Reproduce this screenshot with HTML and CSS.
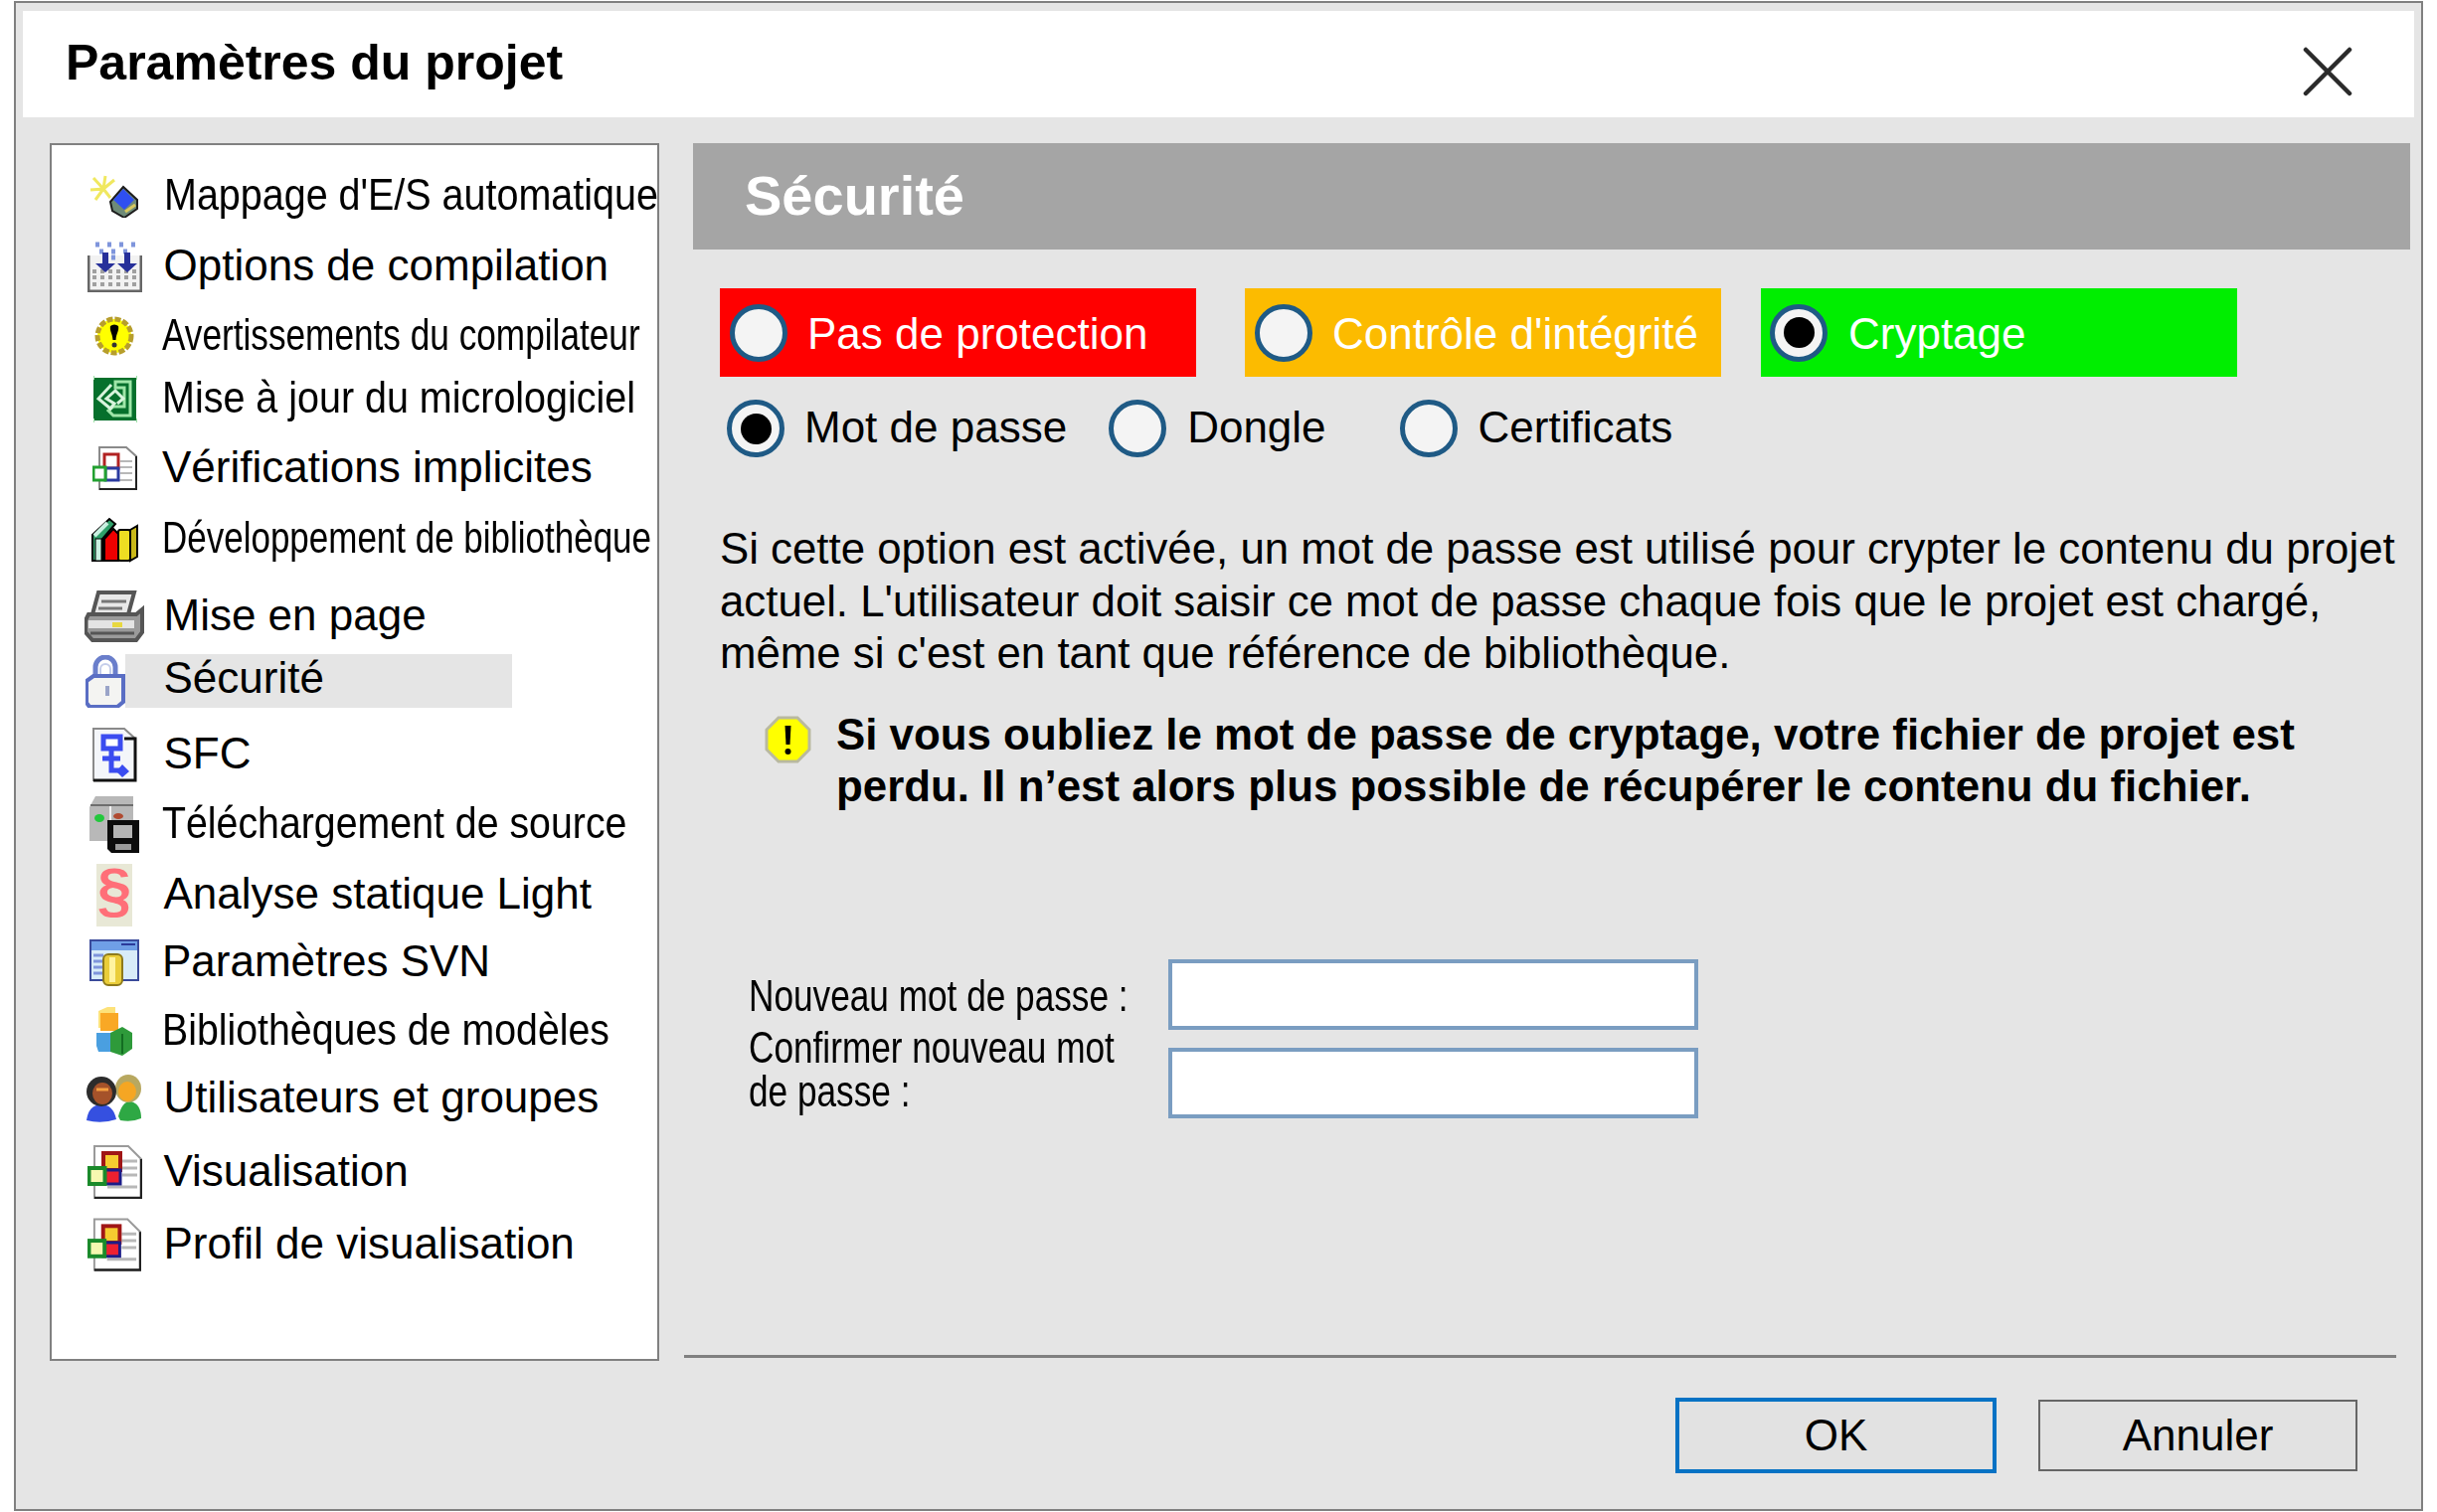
FILE: index.html
```html
<!DOCTYPE html>
<html lang="fr">
<head>
<meta charset="utf-8">
<title>Paramètres du projet</title>
<link rel="stylesheet" href="styles.css">
</head>
<body>
<div class="dialog">
  <header class="titlebar">
    <h1 class="title">Paramètres du projet</h1>
    <svg class="close" width="50" height="50" viewBox="0 0 50 50"><path d="M3 3 L47 47 M47 3 L3 47" stroke="#2a2a2a" stroke-width="4.500" stroke-linecap="round" fill="none"/></svg>
  </header>
  <div class="content">
    <nav class="sidebar">
      <div class="row">
        <div class="icon-box"><svg class="icon" width="54" height="43" viewBox="0 0 54 43">
          <path d="M16 14 L6 3 M16 14 L18 1 M16 14 L27 5 M16 14 L3 15 M16 14 L8 25 M16 14 L23 23" stroke="#f0e860" stroke-width="3"/>
          <path d="M23 27 L36 12 L50 25 L50 34 L37 43 L25 36 Z" fill="#6e8a78" stroke="#1c1c1c" stroke-width="2"/>
          <path d="M26 25 L36 14 L47 25 L37 35 Z" fill="#2f4ff0"/>
          <path d="M38 37 L48 30" stroke="#d8c860" stroke-width="3"/>
        </svg></div>
        <span class="label cond-90">Mappage d'E/S automatique</span>
      </div>
      <div class="row">
        <div class="icon-box"><svg class="icon" width="55" height="51" viewBox="0 0 55 51">
          <path d="M1 14 V50 H54 V14" fill="#f2f2f2" stroke="#666" stroke-width="3"/>
          <path d="M5 30 H50 M5 36 H50 M5 43 H50" stroke="#a0a0a0" stroke-width="4" stroke-dasharray="4 4"/>
          <path d="M8 3 H50 M12 10 H44 M24 16 H32" stroke="#7f95dc" stroke-width="5" stroke-dasharray="4 8"/>
          <path d="M15 11 V22 H8 L18 31 L28 22 H21 V11 Z M37 11 V22 H30 L40 31 L50 22 H43 V11 Z" fill="#27309a"/>
        </svg></div>
        <span class="label">Options de compilation</span>
      </div>
      <div class="row">
        <div class="icon-box"><svg class="icon" width="40" height="40" viewBox="0 0 40 40">
          <circle cx="20" cy="20" r="17" fill="#ffff00" stroke="#b79e2c" stroke-width="5" stroke-dasharray="6 2"/>
          <path d="M16 10 A6 6 0 0 1 24 10 C25 15 22 17 21.500 24 H18.500 C18 17 15 15 16 10 Z" fill="#000"/>
          <circle cx="20" cy="29" r="2.500" fill="#333"/>
        </svg></div>
        <span class="label cond-80 nudge">Avertissements du compilateur</span>
      </div>
      <div class="row">
        <div class="icon-box"><svg class="icon" width="47" height="47" viewBox="0 0 47 47">
          <rect x="2" y="2" width="43" height="43" fill="#06702c"/>
          <path d="M2 2 h1 M45 2 h1 M2 45 h1 M45 45 h1" stroke="#9ee0a8" stroke-width="4"/>
          <path d="M24 6 H39 V40 H22 L17 35 L22 31 H33 V12 H24 Z" fill="none" stroke="#9fe6a8" stroke-width="3"/>
          <path d="M20 9 L7 23 L19 33 L23 28 L15 23 L24 15 L32 23 L26 28" fill="none" stroke="#d8f4dc" stroke-width="3"/>
        </svg></div>
        <span class="label cond-93 nudge">Mise à jour du micrologiciel</span>
      </div>
      <div class="row">
        <div class="icon-box"><svg class="icon" width="45" height="44" viewBox="0 0 45 44">
          <path d="M7 1 H34 L44 10 V43 H7 Z" fill="#fff" stroke="#8a8a8a" stroke-width="2"/>
          <path d="M44 10 V43 H7" fill="none" stroke="#222" stroke-width="2"/>
          <path d="M28 15 H40 M28 21 H40 M28 27 H40 M14 34 H40" stroke="#b8b8b8" stroke-width="2"/>
          <rect x="12" y="8" width="14" height="14" fill="#fff" stroke="#b12222" stroke-width="3"/>
          <rect x="13" y="22" width="13" height="12" fill="#fff" stroke="#2a3aa0" stroke-width="3"/>
          <rect x="1" y="21" width="12" height="13" fill="#fff" stroke="#22a030" stroke-width="3"/>
        </svg></div>
        <span class="label nudge">Vérifications implicites</span>
      </div>
      <div class="row">
        <div class="icon-box"><svg class="icon" width="47" height="48" viewBox="0 0 47 48">
          <path d="M1 20 L18 4 L24 9 L11 24 V46 H1 Z" fill="#2fa06a" stroke="#000" stroke-width="2"/>
          <path d="M3 21 L16 8" stroke="#c8f0e0" stroke-width="4"/>
          <rect x="4" y="24" width="6" height="22" fill="#c8f0e0" stroke="#000"/>
          <path d="M13 24 L22 14 L27 19 V46 H13 Z" fill="#ee0000" stroke="#000" stroke-width="2"/>
          <rect x="27" y="15" width="12" height="31" rx="2" fill="#eedd22" stroke="#000" stroke-width="2"/>
          <path d="M39 15 L46 11 V42 L39 46 Z" fill="#c9b818" stroke="#000" stroke-width="2"/>
        </svg></div>
        <span class="label cond-79 nudge">Développement de bibliothèque</span>
      </div>
      <div class="row">
        <div class="icon-box"><svg class="icon" width="60" height="52" viewBox="0 0 60 52">
          <path d="M14 2 H50 L44 24 H8 Z" fill="#e8e8e8" stroke="#555" stroke-width="4"/>
          <path d="M17 11 H42 M14 18 H38" stroke="#777" stroke-width="3"/>
          <path d="M4 24 H52 L58 19 V42 L52 50 H8 L1 42 V30 Z" fill="#9a9a9a" stroke="#555" stroke-width="4"/>
          <rect x="4" y="30" width="46" height="8" fill="#e4e4e4"/>
          <rect x="28" y="32" width="10" height="5" fill="#e8d840"/>
          <path d="M6 43 H50" stroke="#555" stroke-width="3"/>
        </svg></div>
        <span class="label">Mise en page</span>
      </div>
      <div class="row row-selected">
        <div class="icon-box icon-box-lock"><svg class="icon icon-lock" width="40" height="53" viewBox="0 0 40 53">
          <path d="M10 24 V12 A10 10 0 0 1 30 12 V24" fill="none" stroke="#6a7ecb" stroke-width="5"/>
          <path d="M15 24 V14 A5 5 0 0 1 25 14 V24" fill="none" stroke="#c4cdea" stroke-width="2"/>
          <path d="M1 26 L8 21 H38 V47 L32 52 H4 L1 48 Z" fill="#f4f4f2" stroke="#5a6ec4" stroke-width="4"/>
          <path d="M22 31 V41" stroke="#9aa4c8" stroke-width="4"/>
        </svg></div>
        <span class="label label-selected">Sécurité</span>
      </div>
      <div class="row">
        <div class="icon-box"><svg class="icon" width="46" height="56" viewBox="0 0 46 56">
          <path d="M2 2 H33 L44 12 V54 H2 Z" fill="#f4f6fa" stroke="#8a8a8a" stroke-width="2"/>
          <path d="M33 12 H44 V54 H2" fill="none" stroke="#111" stroke-width="3"/>
          <rect x="12" y="10" width="17" height="12" fill="#fff" stroke="#3b4cf0" stroke-width="5"/>
          <path d="M20 22 V44 H30 M11 32 H29" fill="none" stroke="#3b4cf0" stroke-width="5"/>
          <path d="M31 38 L38 45 L31 51 L25 45 Z" fill="#3b4cf0"/>
        </svg></div>
        <span class="label">SFC</span>
      </div>
      <div class="row">
        <div class="icon-box"><svg class="icon" width="50" height="58" viewBox="0 0 50 58">
          <path d="M0 12 L6 1 H44 V46 H0 Z" fill="#b8b8b8"/>
          <path d="M21 10 V46" stroke="#f2f2f2" stroke-width="2"/>
          <path d="M1 10 H44" stroke="#6e6e6e" stroke-width="2"/>
          <ellipse cx="10" cy="23" rx="5" ry="4" fill="#22c83c"/>
          <ellipse cx="29" cy="21" rx="5" ry="3" fill="#b04a30"/>
          <path d="M18 25 H50 V58 H22 L18 54 Z" fill="#0c0c0c"/>
          <rect x="24" y="30" width="19" height="13" fill="#b4b4b4"/>
          <rect x="26" y="49" width="16" height="6" fill="#9a9a9a"/>
        </svg></div>
        <span class="label cond-89 nudge">Téléchargement de source</span>
      </div>
      <div class="row">
        <div class="icon-box"><svg class="icon" width="36" height="63" viewBox="0 0 36 63">
          <rect width="36" height="63" fill="#e8e8d6"/>
          <text class="para-sign" x="18" y="47" text-anchor="middle">§</text>
        </svg></div>
        <span class="label">Analyse statique Light</span>
      </div>
      <div class="row">
        <div class="icon-box"><svg class="icon" width="50" height="47" viewBox="0 0 50 47">
          <rect x="1" y="1" width="48" height="40" fill="#d8ecf8" stroke="#3a4a9a" stroke-width="2"/>
          <rect x="2" y="2" width="46" height="9" fill="#6f9fe6"/>
          <path d="M32 5 H46" stroke="#2a3a9a" stroke-width="2"/>
          <path d="M4 16 H14 M4 22 H14 M4 28 H14 M4 34 H14" stroke="#7f95dc" stroke-width="3"/>
          <rect x="14" y="15" width="19" height="31" rx="5" fill="#eacd3a" stroke="#8e7a1a" stroke-width="2"/>
          <rect x="20" y="18" width="6" height="25" fill="#fff3a0"/>
        </svg></div>
        <span class="label nudge">Paramètres SVN</span>
      </div>
      <div class="row">
        <div class="icon-box"><svg class="icon" width="38" height="51" viewBox="0 0 38 51">
          <path d="M3 5 L12 1 H20 V22 H3 Z" fill="#fde27a"/>
          <rect x="5" y="7" width="18" height="18" fill="#f9a825"/>
          <path d="M1 27 H15 V46 H3 L1 40 Z" fill="#4a9fe0"/>
          <path d="M15 27 L27 21 L37 27 V43 L27 50 L15 46 Z" fill="#2e9a3a"/>
          <path d="M27 28 V48" stroke="#136d22" stroke-width="2"/>
        </svg></div>
        <span class="label cond-89 nudge">Bibliothèques de modèles</span>
      </div>
      <div class="row">
        <div class="icon-box"><svg class="icon" width="56" height="48" viewBox="0 0 56 48">
          <path d="M32 42 Q36 26 45 27 Q55 30 55 44 Q46 48 34 46 Z" fill="#2ea844"/>
          <ellipse cx="42" cy="14" rx="13" ry="14" fill="#b8a860"/>
          <ellipse cx="41" cy="17" rx="9" ry="10" fill="#f5a623"/>
          <path d="M0 46 Q2 31 14 30 Q27 30 30 45 Q15 50 0 46 Z" fill="#3550e0"/>
          <ellipse cx="15" cy="17" rx="15" ry="15" fill="#2c2c2c"/>
          <ellipse cx="16" cy="19" rx="10" ry="11" fill="#a5522a"/>
          <path d="M10 15 H22" stroke="#f5a040" stroke-width="3"/>
        </svg></div>
        <span class="label">Utilisateurs et groupes</span>
      </div>
      <div class="row">
        <div class="icon-box"><svg class="icon" width="55" height="54" viewBox="0 0 55 54">
          <path d="M7 1 H41 L54 14 V53 H7 Z" fill="#fff" stroke="#9a9a9a" stroke-width="2"/>
          <path d="M54 14 V53 H7" fill="none" stroke="#222" stroke-width="2.500"/>
          <path d="M35 16 H50 M35 23 H50 M35 30 H50 M20 42 H50" stroke="#b8b8b8" stroke-width="3"/>
          <rect x="16" y="8" width="17" height="17" fill="#f6cc30" stroke="#a01616" stroke-width="4"/>
          <rect x="16" y="25" width="17" height="14" fill="#ee2030" stroke="#1c1c88" stroke-width="3"/>
          <rect x="1.500" y="23" width="16" height="16" fill="#f6f8b0" stroke="#1a8a2a" stroke-width="4"/>
        </svg></div>
        <span class="label">Visualisation</span>
      </div>
      <div class="row">
        <div class="icon-box"><svg class="icon" width="54" height="54" viewBox="0 0 55 54">
          <path d="M7 1 H41 L54 14 V53 H7 Z" fill="#fff" stroke="#9a9a9a" stroke-width="2"/>
          <path d="M54 14 V53 H7" fill="none" stroke="#222" stroke-width="2.500"/>
          <path d="M35 16 H50 M35 23 H50 M35 30 H50 M20 42 H50" stroke="#b8b8b8" stroke-width="3"/>
          <rect x="16" y="8" width="17" height="17" fill="#f6cc30" stroke="#a01616" stroke-width="4"/>
          <rect x="16" y="25" width="17" height="14" fill="#ee2030" stroke="#1c1c88" stroke-width="3"/>
          <rect x="1.500" y="23" width="16" height="16" fill="#f6f8b0" stroke="#1a8a2a" stroke-width="4"/>
        </svg></div>
        <span class="label">Profil de visualisation</span>
      </div>
    </nav>

    <main class="main">
      <div class="panel-head">Sécurité</div>
      <div class="panel-body">
        <div class="tabs">
          <div class="tab tab-red"><span class="radio"></span><span class="tab-text">Pas de protection</span></div>
          <div class="tab tab-orange"><span class="radio"></span><span class="tab-text">Contrôle d'intégrité</span></div>
          <div class="tab tab-green"><span class="radio radio-on"></span><span class="tab-text">Cryptage</span></div>
        </div>
        <div class="methods">
          <div class="method"><span class="radio radio-on"></span><span class="method-text">Mot de passe</span></div>
          <div class="method method-dongle"><span class="radio"></span><span class="method-text">Dongle</span></div>
          <div class="method method-cert"><span class="radio"></span><span class="method-text">Certificats</span></div>
        </div>
        <p class="description">Si cette option est activée, un mot de passe est utilisé pour crypter le contenu du projet actuel. L'utilisateur doit saisir ce mot de passe chaque fois que le projet est chargé, même si c'est en tant que référence de bibliothèque.</p>
        <div class="notice">
          <svg class="notice-icon" width="47" height="48" viewBox="0 0 47 48">
            <path d="M14 2 H33 L45 14 V34 L33 46 H14 L2 34 V14 Z" fill="#ffff00" stroke="#b9b9a0" stroke-width="3"/>
            <path d="M20.500 10 H26.500 L25.500 29 H21.500 Z" fill="#000"/>
            <circle cx="23.500" cy="36" r="3" fill="#000"/>
          </svg>
          <p class="notice-text">Si vous oubliez le mot de passe de cryptage, votre fichier de projet est perdu. Il n’est alors plus possible de récupérer le contenu du fichier.</p>
        </div>
        <div class="form">
          <label class="field-label"><span class="squeeze">Nouveau mot de passe :</span></label>
          <div class="input"></div>
          <label class="field-label field-label-two"><span class="squeeze">Confirmer nouveau mot<br>de passe :</span></label>
          <div class="input"></div>
        </div>
      </div>
      <div class="divider"></div>
      <div class="buttons">
        <div class="btn btn-primary">OK</div>
        <div class="btn">Annuler</div>
      </div>
    </main>
  </div>
</div>
</body>
</html>
```
FILE: styles.css
```css
* { box-sizing: border-box; }
html, body { margin: 0; padding: 0; background: #fff; }
body {
  padding: 1px 1px 1px 14px;
  font-family: "Liberation Sans", Arial, sans-serif;
  font-size: 44px;
  color: #000;
}
.dialog {
  width: 2423px;
  height: 1519px;
  border: 2px solid #808080;
  background: #e5e5e5;
  overflow: hidden;
}
.titlebar {
  margin: 8px 7px 0;
  height: 107px;
  padding: 0 62px 0 43px;
  background: #fff;
  display: flex;
  align-items: center;
  justify-content: space-between;
}
.title { margin: 0; font-size: 50px; font-weight: 700; line-height: 60px; padding-bottom: 4px; }
.close { margin-top: 15px; filter: blur(0.7px); }
.content { display: flex; align-items: flex-start; margin-top: 26px; padding-left: 33.500px; }

.sidebar {
  width: 613.500px;
  height: 1225px;
  flex: none;
  border: 2px solid #808080;
  background: #fff;
  padding: 29px 0 0 33.500px;
  display: grid;
  grid-template-rows: 71px 70px 63px 70px 71px 78px 67px 72px 70px 71px 68px 69px 68px 74px 73px 40px;
  align-content: start;
}
.row { height: 40px; display: flex; align-items: center; white-space: nowrap; }
.icon-box { width: 60px; flex: none; display: flex; justify-content: center; margin-right: 19.500px; }
.icon { display: block; margin-top: 4px; flex: none; filter: blur(0.7px); }
.icon-box-lock { width: 41px; margin-right: 0; }
.icon-lock { margin-top: 0; }
.label { display: block; line-height: 40px; padding-top: 2px; transform-origin: left center; }
.nudge { margin-left: -1.500px; }
.cond-79 { transform: scaleX(.795); }
.cond-80 { transform: scaleX(.8); }
.cond-89 { transform: scaleX(.893); }
.cond-90 { transform: scaleX(.897); }
.cond-93 { transform: scaleX(.897); }
.label-selected {
  width: 389px;
  height: 54px;
  padding: 4px 0 10px 38.500px;
  background: #e5e5e5;
  flex: none;
}
.para-sign { font-size: 62px; font-weight: 700; fill: #ff6f78; font-family: "Liberation Sans", sans-serif; }

.main { width: 1727px; flex: none; margin-left: 34px; }
.panel-head {
  height: 107px;
  background: #a5a5a5;
  color: #fff;
  font-size: 56px;
  font-weight: 700;
  line-height: 105px;
  padding-left: 52px;
}
.panel-body { padding: 39px 0 0 27px; }
.tabs { display: flex; }
.tab {
  height: 89px;
  display: flex;
  align-items: center;
  gap: 20px;
  padding-left: 10px;
  color: #fff;
  flex: none;
}
.tab-text { padding-top: 2px; }
.tab-red { width: 479px; background: #ff0000; }
.tab-orange { width: 479px; margin-left: 49px; background: #fcbb00; }
.tab-green { width: 479px; margin-left: 40px; background: #00ee00; gap: 21px; padding-left: 9px; }
.radio {
  width: 58px;
  height: 58px;
  flex: none;
  border: 5px solid #1f5a85;
  border-radius: 50%;
  background: #f4f4f4;
  display: flex;
  align-items: center;
  justify-content: center;
}
.radio-on::after { content: ""; width: 31px; height: 31px; border-radius: 50%; background: #000; }
.methods { display: flex; margin-top: 23px; padding-left: 7px; }
.method { display: flex; align-items: center; gap: 20px; height: 58px; }
.method-text { padding-bottom: 2px; }
.method-dongle { margin-left: 42px; gap: 21px; }
.method-cert { margin-left: 74px; gap: 21px; }
.description { margin: 66px 0 0; font-size: 43.800px; line-height: 52.500px; }
.notice { display: flex; align-items: flex-start; gap: 25px; margin-top: 29px; padding-left: 45px; }
.notice-icon { flex: none; margin-top: 7px; filter: blur(0.4px); }
.notice-text { margin: 0; font-size: 43.850px; font-weight: 700; line-height: 52.500px; }
.form {
  display: grid;
  grid-template-columns: 422px 533px;
  grid-auto-rows: 71px;
  row-gap: 18px;
  margin: 147.500px 0 0 29px;
}
.field-label { display: flex; align-items: center; white-space: nowrap; padding-top: 2px; }
.field-label-two { align-items: flex-start; margin-top: -22px; padding-top: 0; }
.squeeze { display: block; line-height: 44px; transform: scaleX(.8); transform-origin: left center; }
.input { background: #fff; border: 4px solid #7a9dc1; }
.divider { height: 3px; margin: 238px 14px 0 -9px; background: #808080; }
.buttons { display: flex; justify-content: flex-end; align-items: center; gap: 42px; margin-top: 40px; padding-right: 53px; }
.btn {
  width: 321px;
  height: 72px;
  border: 2px solid #666;
  background: #e2e2e2;
  display: flex;
  align-items: center;
  justify-content: center;
}
.btn-primary { width: 323px; height: 76px; border: 4px solid #0672c4; }
```
